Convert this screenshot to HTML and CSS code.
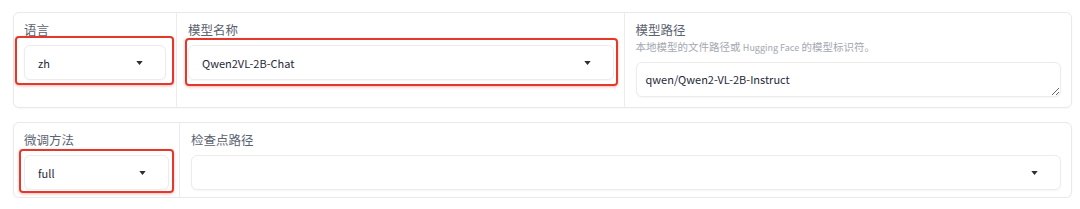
FILE: index.html
```html
<!DOCTYPE html>
<html lang="zh">
<head>
    <meta charset="UTF-8">
    <title>模型设置</title>
    <link rel="stylesheet" href="styles.css">
</head>
<body>
    <div class="page">
        <div class="block">
            <div class="col col-first">
                <div class="label">语言</div>
                <div class="marked mark-lang">
                    <div class="select">
                        <span>zh</span>
                        <svg class="arrow" viewBox="0 0 8 5"><path d="M0 0h8L4 5z"/></svg>
                    </div>
                </div>
            </div>
            <div class="col">
                <div class="label">模型名称</div>
                <div class="marked mark-model">
                    <div class="select">
                        <span>Qwen2VL-2B-Chat</span>
                        <svg class="arrow" viewBox="0 0 8 5"><path d="M0 0h8L4 5z"/></svg>
                    </div>
                </div>
            </div>
            <div class="col">
                <div class="label">模型路径</div>
                <div class="info">本地模型的文件路径或 <span class="latin">Hugging Face</span> 的模型标识符。</div>
                <textarea class="field" rows="1">qwen/Qwen2-VL-2B-Instruct</textarea>
            </div>
        </div>

        <div class="block compact">
            <div class="col col-first wide">
                <div class="label">微调方法</div>
                <div class="marked mark-method">
                    <div class="select">
                        <span>full</span>
                        <svg class="arrow" viewBox="0 0 8 5"><path d="M0 0h8L4 5z"/></svg>
                    </div>
                </div>
            </div>
            <div class="col">
                <div class="label">检查点路径</div>
                <div class="select">
                    <span></span>
                    <svg class="arrow" viewBox="0 0 8 5"><path d="M0 0h8L4 5z"/></svg>
                </div>
            </div>
        </div>
    </div>
</body>
</html>
```

FILE: styles.css
```css
body {
    margin: 0;
    background-color: #fff;
    font-family: "Noto Sans CJK SC", "Noto Sans", sans-serif;
    font-size: 11px;
    color: #1f2937;
}

.page {
    padding: 12px 8px 0 13px;
    display: flex;
    flex-direction: column;
    gap: 14px;
}

.block {
    display: flex;
    border: 1px solid #e8e9ec;
    border-radius: 6px;
    background-color: #fff;
    box-shadow: 0 1px 2px rgba(0, 0, 0, 0.03);
}

.col {
    flex: 1;
    min-width: 0;
    padding: 8px 10px 10px 11px;
    border-left: 1px solid #ececef;
    display: flex;
    flex-direction: column;
}

.compact .col {
    padding-bottom: 7px;
}

.col-first {
    flex: 0 0 162px;
    box-sizing: border-box;
    padding-left: 10px;
    border-left: none;
}

.col-first.wide {
    flex-basis: 165px;
}

.label {
    font-size: 12.5px;
    line-height: 18px;
    color: #5b6270;
    margin-bottom: 6px;
}

.info {
    font-size: 10.5px;
    line-height: 16px;
    height: 16px;
    color: #a3a8b0;
    margin-top: -6px;
    margin-bottom: 7px;
}

.info .latin {
    font-size: 9px;
    line-height: 1;
}

.select {
    height: 35px;
    box-sizing: border-box;
    border: 1px solid #ececef;
    border-radius: 6px;
    background-color: #fff;
    box-shadow: 0 1px 2px rgba(0, 0, 0, 0.04);
    display: flex;
    align-items: center;
    justify-content: space-between;
    padding: 0 22px 0 13px;
    color: #1f2937;
}

.arrow {
    width: 7px;
    height: 4px;
    fill: #2a2f38;
}

.field {
    display: block;
    height: 35px;
    box-sizing: border-box;
    border: 1px solid #ececef;
    border-radius: 6px;
    box-shadow: 0 1px 2px rgba(0, 0, 0, 0.04);
    padding: 8px 9px;
    font-family: inherit;
    font-size: 11px;
    line-height: 17px;
    color: #1f2937;
    resize: vertical;
    overflow: hidden;
    outline: none;
}

/* 红色标注框 */
.marked {
    position: relative;
}

.marked::after {
    content: "";
    position: absolute;
    border: 2px solid #e2392c;
    border-radius: 4px;
    box-shadow: 0 1px 3px rgba(226, 57, 44, 0.35);
    pointer-events: none;
}

.mark-lang::after {
    top: -9px;
    left: -9px;
    right: -8px;
    bottom: -5px;
}

.mark-model::after {
    top: -7px;
    left: -3px;
    right: -4px;
    bottom: -6px;
}

.mark-method::after {
    top: -6px;
    left: -5px;
    right: -5px;
    bottom: -3px;
}
```
